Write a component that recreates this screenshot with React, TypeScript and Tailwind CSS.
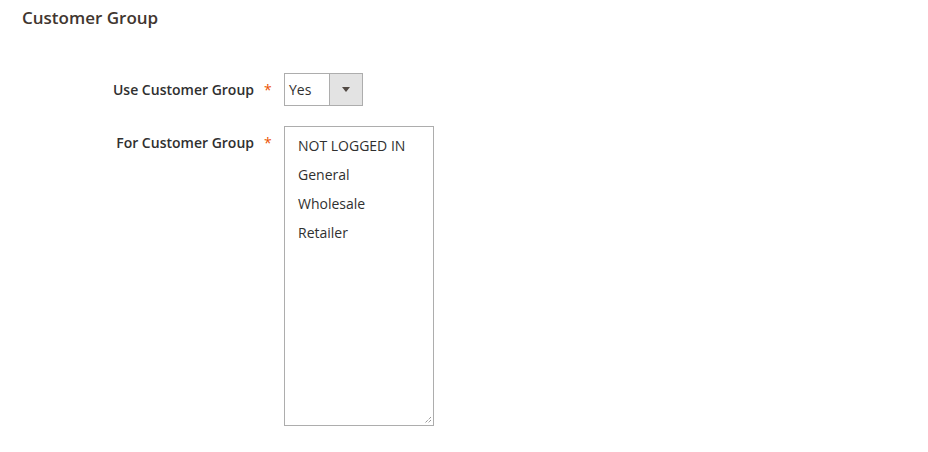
import React from 'react';

const groups = ['NOT LOGGED IN', 'General', 'Wholesale', 'Retailer'];

function Label({ text }: { text: string }) {
  return (
    <div className="flex w-[284px] shrink-0 items-start pt-[7px]">
      <span className="w-[254px] text-right text-[14px] font-semibold leading-[20px] text-[#303030]">
        {text}
      </span>
      <span className="ml-[10px] text-[14px] font-normal leading-[20px] text-[#eb5202]">*</span>
    </div>
  );
}

export default function App() {
  return (
    <div
      className="h-[452px] w-[928px] bg-white"
      style={{ fontFamily: '"Open Sans", "Liberation Sans", sans-serif' }}
    >
      <div className="pl-[22px] pt-[6px] text-[17px] font-semibold leading-[24px] text-[#41362f]">
        Customer Group
      </div>

      <div className="mt-[43px] flex flex-col gap-[20px]">
        {/* Use Customer Group */}
        <div className="flex">
          <Label text="Use Customer Group" />
          <div className="flex h-[33px] w-[79px] border border-[#adadad] bg-white">
            <div className="flex flex-1 items-center pl-[4px] text-[14px] text-[#303030]">Yes</div>
            <div className="flex w-[33px] items-center justify-center border-l border-[#adadad] bg-[#e3e3e3]">
              <svg width="8" height="5" viewBox="0 0 8 5">
                <path d="M0 0 L8 0 L4 5 Z" fill="#514943" />
              </svg>
            </div>
          </div>
        </div>

        {/* For Customer Group */}
        <div className="flex">
          <Label text="For Customer Group" />
          <div className="relative h-[300px] w-[150px] border border-[#adadad] bg-white pl-[13px] pt-[4px]">
            {groups.map((g) => (
              <div key={g} className="h-[29px] text-[14px] leading-[29px] text-[#303030]">
                {g}
              </div>
            ))}
            <svg className="absolute bottom-[1px] right-[1px]" width="9" height="9" viewBox="0 0 9 9">
              <path d="M8 2 L2 8 M8 5 L5 8" stroke="#6a6a6a" strokeWidth="1" strokeDasharray="1 1" />
            </svg>
          </div>
        </div>
      </div>
    </div>
  );
}
